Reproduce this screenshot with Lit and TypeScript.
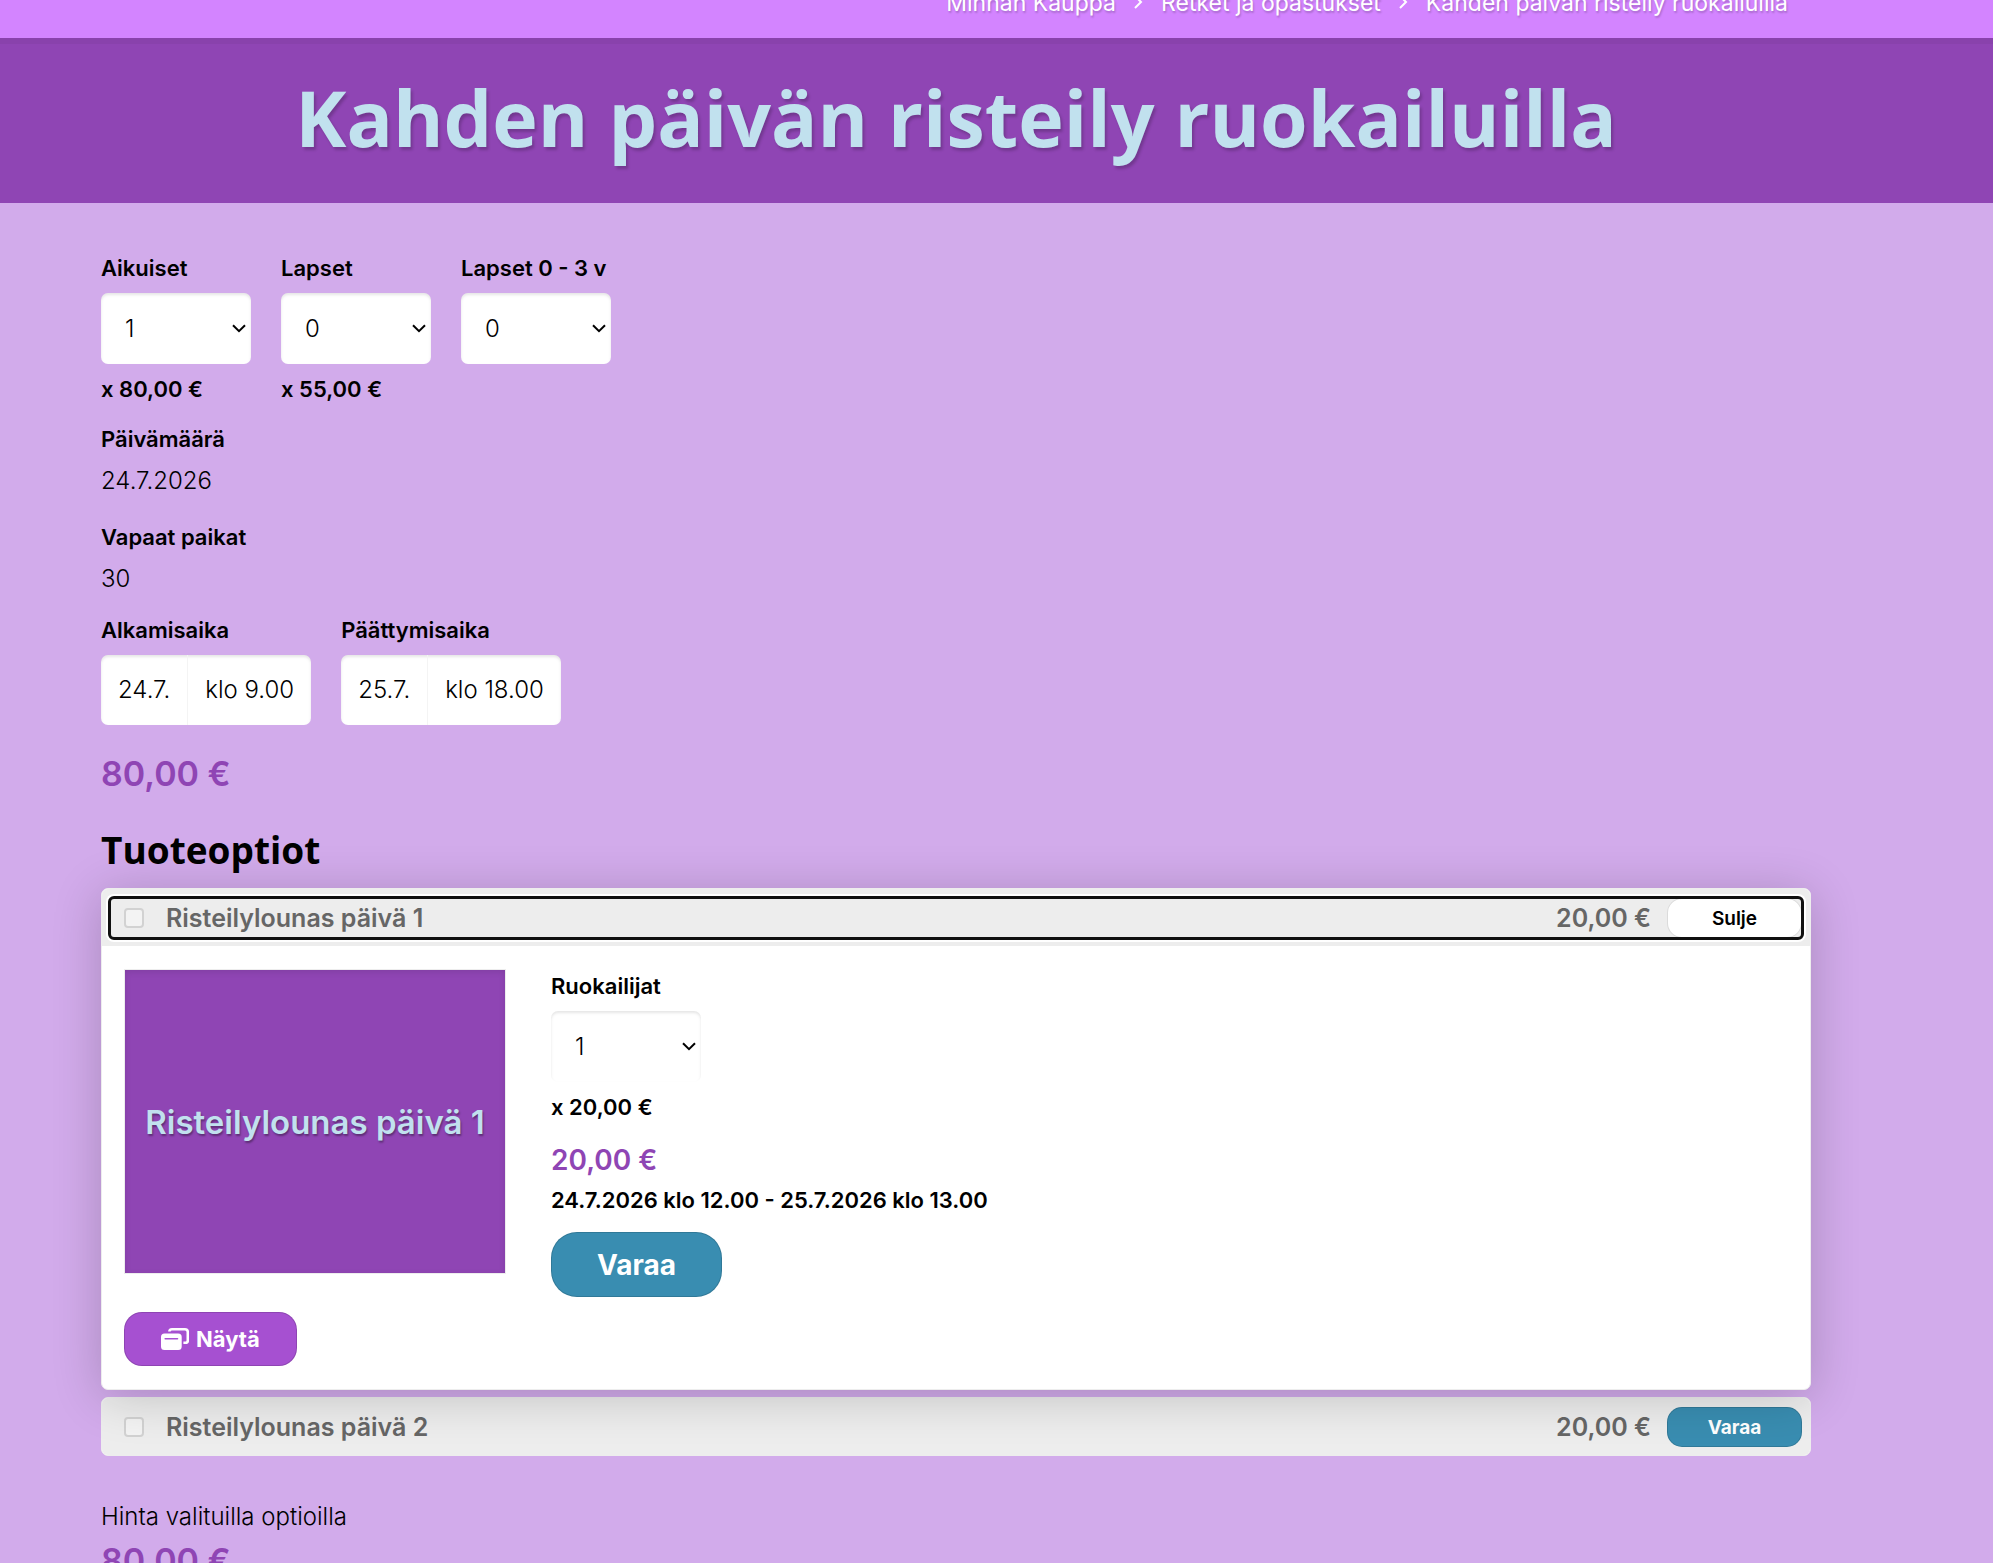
import { LitElement, css, html } from 'lit';
import { customElement, property, state } from 'lit/decorators.js';
import { map } from 'lit/directives/map.js';
import { classMap } from 'lit/directives/class-map.js';

interface Ticket {
    label: string;
    value: number;
    price?: string;
}

interface TimeSlot {
    label: string;
    day: string;
    time: string;
}

interface ProductOption {
    title: string;
    price: string;
    period: string;
}

@customElement('quantity-select')
export class QuantitySelect extends LitElement {
    @property() label = '';
    @property() price = '';
    @property({ type: Number }) value = 0;

    static styles = css`
        :host{
            display: flex;
            flex-direction: column;
            gap: 10px;
            width: 150px;

            font-weight: 600;
            font-size: 22px;
            line-height: 30px;
            white-space: nowrap;
        }

        .control{
            display: grid;
            align-items: center;
        }

        .select,
        .arrow{
            grid-area: 1 / 1;
        }

        .select{
            appearance: none;
            width: 100%;
            height: 71px;
            margin: 0;
            padding: 0 24px;

            border: 0;
            border-radius: 7px;
            background: #fff;
            box-shadow: inset 0 2px 3px rgba(0, 0, 0, 0.1);

            color: #000;
            font-family: inherit;
            font-weight: 300;
            font-size: 24px;
        }

        .arrow{
            justify-self: end;
            width: 14px;
            height: 9px;
            margin-right: 5px;
            pointer-events: none;
        }
    `;

    render() {
        return html`
            <label for="quantity">${this.label}</label>
            <div class="control">
                <select class="select" id="quantity">
                    ${map([0, 1, 2, 3, 4, 5], n => html`<option ?selected=${n === this.value}>${n}</option>`)}
                </select>
                <svg class="arrow" viewBox="0 0 14 9" fill="none" stroke="#000" stroke-width="2">
                    <path d="M1 1.2 L7 7.2 L13 1.2" />
                </svg>
            </div>
            ${this.price ? html`<span>x ${this.price}</span>` : null}
        `;
    }
}

@customElement('app-root')
export class AppRoot extends LitElement {
    @state() private _open = 0;

    private _crumbs = ['Minnan Kauppa', 'Retket ja opastukset', 'Kahden päivän risteily ruokailuilla'];

    private _tickets: Ticket[] = [
        { label: 'Aikuiset', value: 1, price: '80,00 €' },
        { label: 'Lapset', value: 0, price: '55,00 €' },
        { label: 'Lapset 0 - 3 v', value: 0 },
    ];

    private _slots: TimeSlot[] = [
        { label: 'Alkamisaika', day: '24.7.', time: 'klo 9.00' },
        { label: 'Päättymisaika', day: '25.7.', time: 'klo 18.00' },
    ];

    private _options: ProductOption[] = [
        { title: 'Risteilylounas päivä 1', price: '20,00 €', period: '24.7.2026 klo 12.00 - 25.7.2026 klo 13.00' },
        { title: 'Risteilylounas päivä 2', price: '20,00 €', period: '25.7.2026 klo 12.00 - 25.7.2026 klo 13.00' },
    ];

    private _toggle(index: number) {
        this._open = this._open === index ? -1 : index;
    }



    // STYLE

    static styles = css`
        :host{
            --side-left: 101px;
            --side-right: 182px;
            --purple: #8f45b4;
            --blue: #398db1;

            display: block;
            height: 100vh;
            overflow: hidden;

            background: #d2abeb;
            color: #000;
            font-family: "Inter", sans-serif;
            font-weight: 300;
            font-size: 24px;
            line-height: 36px;
        }

        h1, h2, p, dl, dd{
            margin: 0;
        }

        button{
            font-family: inherit;
            cursor: pointer;
        }

        .crumbs{
            display: flex;
            justify-content: flex-end;
            align-items: flex-end;
            gap: 18px;

            box-sizing: border-box;
            height: 38px;
            overflow: hidden;
            padding: 0 calc(var(--side-right) + 23px) 19px var(--side-left);

            background: #d384ff;
            color: #fff;
            font-weight: 400;
            font-size: 23px;
            line-height: 32px;
            text-shadow: 1px 2px 2px rgba(0, 0, 0, 0.2);
            white-space: nowrap;
        }
        .crumbs a{
            color: inherit;
            text-decoration: none;
        }
        .crumbs svg{
            flex: none;
            width: 9px;
            height: 32px;
        }

        .hero{
            padding: 32px var(--side-right) 37px var(--side-left);

            background: var(--purple);
            box-shadow: inset 0 6px 0 rgba(0, 0, 0, 0.04);
        }

        .title{
            color: #c1e1ee;
            font-family: "Open Sans", sans-serif;
            font-weight: 700;
            font-size: 77px;
            line-height: 96px;
            text-align: center;
            text-shadow: 2px 3px 3px rgba(0, 0, 0, 0.2);
        }

        .content{
            padding: 50px var(--side-right) 40px var(--side-left);
        }

        .fields{
            display: flex;
            align-items: flex-start;
            gap: 30px;
        }

        .label{
            font-weight: 600;
            font-size: 22px;
            line-height: 30px;
        }

        .facts{
            display: grid;
            gap: 23px;
            margin: 20px 0 18px;
        }
        .facts dd{
            margin-top: 9px;
        }

        .slot{
            display: grid;
            gap: 10px;
        }

        .slot-box{
            display: flex;
            height: 70px;
            overflow: hidden;

            border-radius: 7px;
            background: #fff;
            box-shadow: inset 0 2px 3px rgba(0, 0, 0, 0.1);
        }

        .slot-input{
            field-sizing: content;
            padding: 0 17px;

            border: 0;
            background: transparent;

            color: inherit;
            font: inherit;
        }
        .slot-input + .slot-input{
            border-left: 1px solid #f4f4f4;
        }

        .total{
            color: var(--purple);
            font-weight: 600;
            font-size: 34px;
            line-height: 44px;
        }
        .fields + .total{
            margin-top: 27px;
        }

        .section-title{
            margin: 30px 0 14px;

            font-family: "Open Sans", sans-serif;
            font-weight: 700;
            font-size: 37px;
            line-height: 48px;
        }

        .options{
            display: grid;
            gap: 7px;
        }

        .option{
            border: 1px solid #ededed;
            border-radius: 7px;
            background: #fff;
        }
        .option.open{
            position: relative;
            box-shadow: 0 6px 50px rgba(0, 0, 0, 0.2);
        }

        .option-head{
            padding: 9px 8px 8px;

            border-radius: 6px;
            background: #ededed;
        }
        .open .option-head{
            border-radius: 6px 6px 0 0;
        }

        .option-bar{
            display: flex;
            align-items: center;
            gap: 16px;
            padding-left: 14px;

            border-radius: 4px;

            color: #666;
            font-weight: 600;
            font-size: 25px;
        }
        .open .option-bar{
            outline: 3px solid #101010;
            outline-offset: -1px;
            box-shadow: 0 0 0 4px #fff;
        }

        .option-name{
            flex: 1;
            display: flex;
            align-items: center;
            gap: 22px;
        }

        .check{
            appearance: none;
            box-sizing: border-box;
            width: 20px;
            height: 20px;
            margin: 0;

            border: 2px solid #d2d2d2;
            border-radius: 4px;
            background: #f3f3f3;
        }

        .btn{
            display: flex;
            justify-content: center;
            align-items: center;
            box-sizing: border-box;

            border: 1px solid rgba(0, 0, 0, 0.14);
            color: #fff;
            background: var(--blue);
            font-weight: 700;
        }
        .btn.small{
            width: 135px;
            height: 40px;
            border-radius: 15px;
            font-size: 19px;
        }
        .btn.close{
            background-color: #fff;
            color: #000;
            font-weight: 600;
        }
        .btn.large{
            height: 65px;
            padding: 0 45px;
            border-radius: 26px;
            font-size: 28px;
        }
        .btn.show{
            gap: 7px;
            height: 54px;
            padding: 0 36px;
            border-radius: 18px;
            background-color: #a650d1;
            font-size: 22px;
        }
        .btn.show svg{
            width: 28px;
            height: 22px;
        }

        .option-body{
            display: flex;
            flex-wrap: wrap;
            gap: 45px;
            padding: 23px 22px;
        }

        .media{
            display: grid;
            justify-items: start;
            gap: 38px;
        }

        .picture{
            display: grid;
            place-items: center;
            width: 380px;
            height: 303px;

            border: 1px solid #ededed;
            background: var(--purple);
            box-shadow: inset 0 2px 6px rgba(0, 0, 0, 0.1);

            color: #c1e1ee;
            font-weight: 600;
            font-size: 33px;
            text-shadow: 1px 2px 2px rgba(0, 0, 0, 0.35);
            white-space: nowrap;
        }

        .details{
            padding-top: 2px;
        }

        .price{
            margin: 20px 0 7px;

            color: var(--purple);
            font-weight: 600;
            font-size: 28px;
        }

        .period{
            margin-bottom: 17px;
        }

        .summary{
            display: grid;
            gap: 4px;
            margin-top: 43px;
        }
    `;



    // MARKUP

    private _renderOption(option: ProductOption, index: number) {
        const open = this._open === index;

        return html`
            <article class="option ${classMap({ open })}">
                <div class="option-head">
                    <div class="option-bar">
                        <label class="option-name">
                            <input class="check" type="checkbox" disabled>
                            ${option.title}
                        </label>
                        <span>${option.price}</span>
                        <button class="btn small ${classMap({ close: open })}" @click=${() => this._toggle(index)}>
                            ${open ? 'Sulje' : 'Varaa'}
                        </button>
                    </div>
                </div>

                ${open ? html`
                    <div class="option-body">
                        <div class="media">
                            <div class="picture">${option.title}</div>
                            <button class="btn show">
                                <svg viewBox="0 0 28 22" fill="none">
                                    <path d="M8.4 3.6 C8.4 2 9.4 1.3 11 1.3 H24 A2.8 2.8 0 0 1 26.8 4.1 V12.4 A2.4 2.4 0 0 1 24.4 14.8 H22.4" stroke="#fff" stroke-width="2.6" />
                                    <path fill-rule="evenodd" d="M3.5 5.6 H17.2 A3.5 3.5 0 0 1 20.7 9.1 V18.5 A3.5 3.5 0 0 1 17.2 22 H3.5 A3.5 3.5 0 0 1 0 18.5 V9.1 A3.5 3.5 0 0 1 3.5 5.6 Z M4.2 10 A0.8 0.8 0 0 0 4.2 11.6 H16.5 A0.8 0.8 0 0 0 16.5 10 Z" fill="#fff" />
                                </svg>
                                Näytä
                            </button>
                        </div>

                        <div class="details">
                            <quantity-select label="Ruokailijat" value="1" price=${option.price}></quantity-select>
                            <p class="price">${option.price}</p>
                            <p class="label period">${option.period}</p>
                            <button class="btn large">Varaa</button>
                        </div>
                    </div>
                ` : null}
            </article>
        `;
    }

    render() {
        return html`
            <nav class="crumbs">
                ${map(this._crumbs, (crumb, i) => html`
                    ${i > 0 ? html`
                        <svg viewBox="0 0 9 32" fill="none" stroke="#fff" stroke-width="2">
                            <path d="M1 9 L7 15 L1 21" />
                        </svg>
                    ` : null}
                    <a href="#">${crumb}</a>
                `)}
            </nav>

            <header class="hero">
                <h1 class="title">Kahden päivän risteily ruokailuilla</h1>
            </header>

            <main class="content">
                <div class="fields">
                    ${map(this._tickets, ticket => html`
                        <quantity-select label=${ticket.label} value=${ticket.value} price=${ticket.price ?? ''}></quantity-select>
                    `)}
                </div>

                <dl class="facts">
                    <div>
                        <dt class="label">Päivämäärä</dt>
                        <dd>24.7.2026</dd>
                    </div>
                    <div>
                        <dt class="label">Vapaat paikat</dt>
                        <dd>30</dd>
                    </div>
                </dl>

                <div class="fields">
                    ${map(this._slots, (slot, i) => html`
                        <div class="slot">
                            <label class="label" for="slot-${i}">${slot.label}</label>
                            <div class="slot-box">
                                <input class="slot-input" id="slot-${i}" .value=${slot.day} readonly>
                                <input class="slot-input" aria-label="${slot.label}, klo" .value=${slot.time} readonly>
                            </div>
                        </div>
                    `)}
                </div>

                <p class="total">80,00 €</p>

                <h2 class="section-title">Tuoteoptiot</h2>
                <div class="options">
                    ${map(this._options, (option, i) => this._renderOption(option, i))}
                </div>

                <div class="summary">
                    <p>Hinta valituilla optioilla</p>
                    <p class="total">80,00 €</p>
                </div>
            </main>
        `;
    }
}
